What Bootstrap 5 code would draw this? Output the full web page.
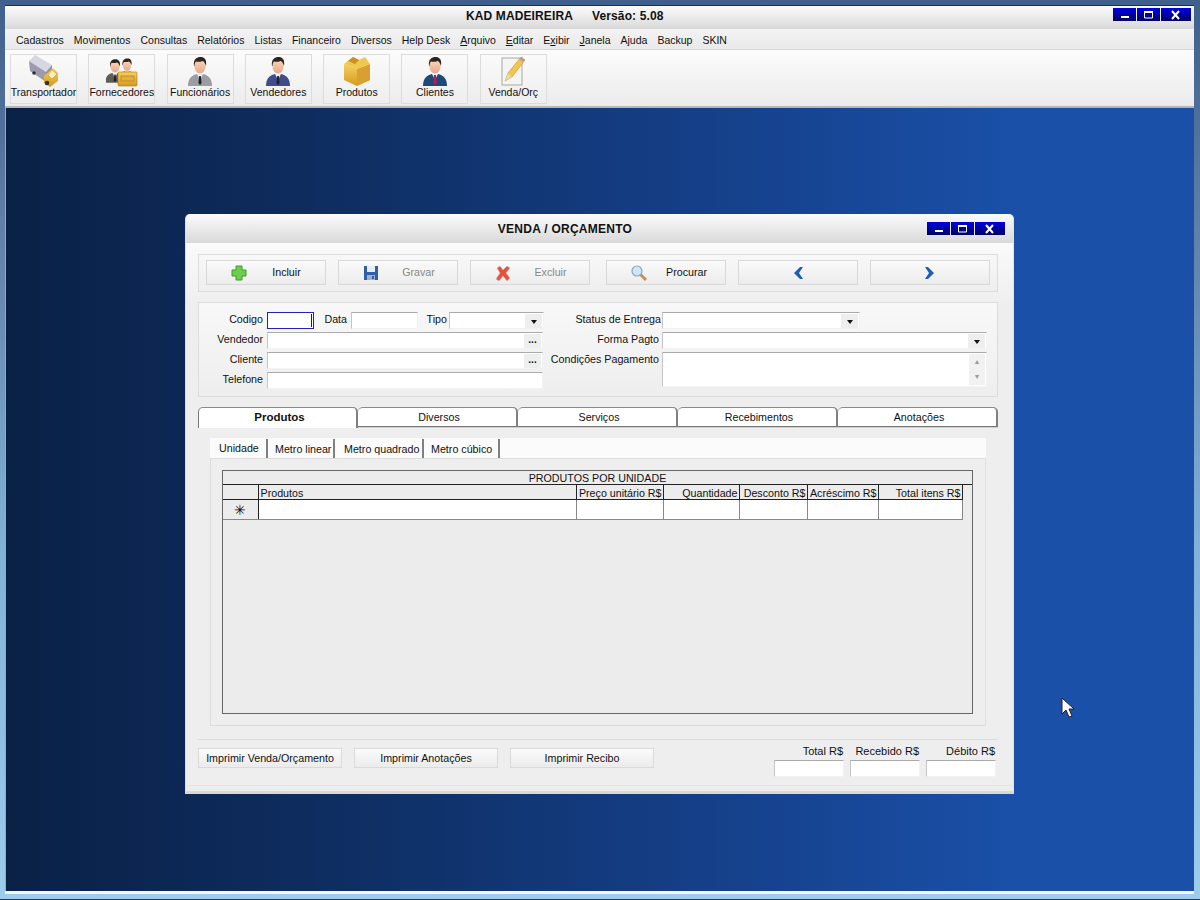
<!DOCTYPE html>
<html lang="pt-BR">
<head>
<meta charset="UTF-8" />
<title>KAD MADEIREIRA</title>
<link href="https://cdn.jsdelivr.net/npm/bootstrap@5.3.0/dist/css/bootstrap.min.css" rel="stylesheet" />
<style>
html, body { height: 100%; margin: 0; }
body { width: 1200px; height: 900px; overflow: hidden; font-family: "Liberation Sans", Arial, sans-serif; font-size: 10.7px; line-height: 13px; color: #111; background: #5d7ea6; }

.app-frame { height: 900px; padding: 5px 6px 5px 5px; background: linear-gradient(180deg, #3f5f8c 0%, #5f7fa8 25%, #7fb0d8 60%, #9ccdec 100%); border-bottom: 1px solid #22364f; }
.app-shell { height: 100%; display: flex; flex-direction: column; border-top: 1px solid #12305e; border-bottom: 3px solid #f0f8fc; }
.app-title { height: 23px; flex: none; background: linear-gradient(180deg, #fbfbfb, #d9d9d9); position: relative; font: bold 12px "Liberation Sans", sans-serif; letter-spacing: .12px; padding-top: 3px; padding-left: 461px; color: #111; }
.app-title span + span { margin-left: 19px; }
.win-btns { position: absolute; top: 2px; right: 3px; display: flex; gap: 1px; }
.win-btn { width: 23px; height: 13px; background: linear-gradient(180deg, #0000e6, #000060); display: flex; align-items: center; justify-content: center; }
.win-btn.close { width: 30px; }
.app-menu { height: 21px; flex: none; background: linear-gradient(180deg, #f3f3f3, #e9e9e9); border-bottom: 1px solid #d8d8d8; padding: 2px 0 0 11px; display: flex; gap: 10px; align-items: center; font-size: 10.5px; }
.app-tools { height: 58px; flex: none; background: linear-gradient(180deg, #fcfcfc, #ebebeb); border-bottom: 2px solid #b6b6b6; padding: 4px 0 0 5px; display: flex; gap: 11.3px; }
.tool { width: 67px; height: 50px; padding: 0; display: flex; flex-direction: column; align-items: center; background: linear-gradient(180deg, #fafafa, #eeeeee); border: 1px solid #dcdcdc; border-radius: 0; font-size: 10.5px; line-height: 13px; color: #111; white-space: nowrap; }
.tool svg { height: 32px; flex: none; margin-bottom: -1px; }
.tool span { display: block; }

.mdi { flex: 1; position: relative; border-left: 1px solid #9aa8b8; background: linear-gradient(90deg, #0a2146 0%, #0e2c5e 25%, #15408a 60%, #1a50a8 85%, #1a50a8 100%); }
.child { position: absolute; left: 179px; top: 106px; width: 829px; height: 580px; background: #ededed; border-radius: 5px 5px 0 0; border-left: 1px solid #cfe2f0; border-right: 1px solid #d8e4ee; border-bottom: 3px solid #ddd8d0; display: flex; flex-direction: column; }
.child-title { height: 29px; flex: none; background: linear-gradient(180deg, #fbfbfb, #d9d9d9); border-radius: 5px 5px 0 0; position: relative; text-align: center; font: bold 12px "Liberation Sans", sans-serif; letter-spacing: .25px; padding-top: 8px; padding-right: 69px; color: #111; }
.child-title .win-btns { top: 8px; right: 8px; }
.child-title .win-btn { width: 23px; }
.child-title .win-btn.close { width: 30px; }
.child-body { flex: 1; margin-bottom: 5px; padding: 11px 15px 0 12px; border-bottom: 1px solid #dde6f0; background: linear-gradient(180deg, #fafafa, #eeeeee 12%); display: flex; flex-direction: column; }

.panel { border: 1px solid #dcdcdc; background: linear-gradient(180deg, #f8f8f8, #eeeeee); }
.action-bar { height: 38px; flex: none; padding: 5px 7px 0; display: flex; }
.act { width: 120px; height: 25px; margin-right: 12px; padding: 0; display: flex; align-items: center; background: linear-gradient(180deg, #fafafa, #ececec); border: 1px solid #d8d8d8; border-radius: 0; font-size: 10.7px; color: #111; }
.act:disabled { opacity: 1; background: linear-gradient(180deg, #fafafa, #ececec); border-color: #d8d8d8; color: #888; }
.act.gap-more { margin-left: 4px; }
.act svg { width: 18px; height: 18px; margin-left: 23px; flex: none; }
.act span { flex: 1; text-align: center; }
.act.nav { justify-content: center; }
.act.nav svg { margin: 0; width: 14px; height: 14px; }

.form-panel { margin-top: 10px; height: 95px; flex: none; padding: 9px 0 0 0; display: flex; }
.fcol-l { width: 344px; flex: none; }
.fcol-r { flex: 1; }
.frow { height: 17px; margin-bottom: 3px; display: flex; align-items: flex-start; }
.frow label { flex: none; text-align: right; line-height: 14px; white-space: nowrap; }
.lbl-l { width: 64px; margin-right: 4px; }
.lbl-r { width: 116px; margin-right: 3px; }
.lbl-r.tight { width: 118px; margin-right: 1px; }
.lbl-data { width: 33px; margin-right: 4px; }
.lbl-tipo { width: 29px; margin-right: 2px; }
.fld { height: 17px; background: #fff; border-top: 1px solid #aaa; border-left: 1px solid #c6c6c6; border-right: 1px solid #f2f2f2; border-bottom: 1px solid #f2f2f2; position: relative; flex: none; }
.fld.focus { border: 1px solid #2222b8; }
.fld.focus::after { content: ""; position: absolute; right: 1px; top: 1px; bottom: 1px; width: 1px; background: #222; }
.w-codigo { width: 47px; }
.w-data { width: 67px; }
.w-tipo { width: 95px; }
.w-left { width: 276px; }
.w-status { width: 198px; }
.w-right { width: 325px; }
.fld .drop { position: absolute; right: 1px; top: 1px; width: 17px; height: 14px; background: #eeeeee; display: flex; align-items: center; justify-content: center; }
.fld .drop::before { content: ""; border-left: 3.5px solid transparent; border-right: 3.5px solid transparent; border-top: 4px solid #111; margin-top: 2px; }
.fld .dots { position: absolute; right: 1px; top: 1px; width: 17px; height: 14px; background: #eeeeee; font-weight: bold; font-size: 10px; line-height: 12px; text-align: center; letter-spacing: 0; }
.fld.memo { height: 35px; }
.memo .scroll { position: absolute; right: 1px; top: 1px; bottom: 1px; width: 16px; background: #f1f1f1; color: #9a9a9a; font-size: 7px; line-height: 10px; text-align: center; display: flex; flex-direction: column; justify-content: space-around; }

.tabs-main { margin-top: 10px; height: 21px; flex: none; display: flex; border-bottom: 1px solid #cfcfcf; }
.tabm { width: 160px; height: 20px; padding-left: 4px; background: #fff; border-top: 1px solid #8a8a8a; border-right: 2px solid #808080; border-bottom: 1px solid #777; border-radius: 5px 5px 0 0; text-align: center; line-height: 19px; font-size: 10.7px; }
.tabm:first-child { border-left: 1px solid #777; }
.tabm.active { height: 21px; border-bottom: 0; font-weight: bold; font-size: 11.5px; }
.tab-body { height: 312px; flex: none; padding: 10px 12px 0; border-bottom: 1px solid #dcdcdc; }
.tabs-sub { height: 20px; background: #fbfbfb; display: flex; padding-left: 2px; }
.tabs-sub div { height: 19px; margin-top: 1px; line-height: 20px; padding-left: 7px; border-right: 2px solid #808080; white-space: nowrap; font-size: 10.7px; }
.tabs-sub div:first-child { line-height: 18px; }
.tabs-sub .s1 { width: 56px; }
.tabs-sub .s2 { width: 67px; }
.tabs-sub .s3 { width: 89px; padding-left: 9px; }
.tabs-sub .s4 { width: 76px; }
.sub-body { height: 268px; border: 1px solid #dcdcdc; border-right-color: #e0e0e0; padding: 11px 12px 0 11px; }
.grid-box { height: 244px; border: 1px solid #666; background: #ececec; }
.grid-title { height: 14px; border-bottom: 1px solid #222; text-align: center; line-height: 15px; font-size: 10.7px; }
.grid-table { width: 739px; table-layout: fixed; border-collapse: collapse; }
.grid-table .c0 { width: 35px; }
.grid-table .c1 { width: 318px; }
.grid-table .c2 { width: 87px; }
.grid-table .c3 { width: 76px; }
.grid-table .c4 { width: 68px; }
.grid-table .c5 { width: 71px; }
.grid-table .c6 { width: 84px; }
.grid-table th { height: 14px; font-weight: normal; border-right: 1px solid #222; border-bottom: 1px solid #222; padding: 2px 1px 0 2px; line-height: 12px; font-size: 10.7px; white-space: nowrap; }
.grid-table td { height: 20px; background: #fff; border-right: 1px solid #888; border-bottom: 1px solid #888; padding: 0; }
.grid-table td.star { background: #ececec; text-align: center; border-right: 1px solid #222; font-size: 14px; line-height: 16px; }

.foot { margin-top: 8px; display: flex; justify-content: space-between; }
.foot-btns { display: flex; gap: 12px; }
.foot-btns .btn { width: 144px; height: 20px; padding: 0; font-size: 10.7px; line-height: 18px; color: #111; background: linear-gradient(180deg, #fbfbfb, #ebebeb); border: 1px solid #dadada; border-radius: 0; }
.totals { display: flex; gap: 6px; padding-right: 2px; margin-top: -4px; }
.total { width: 70px; text-align: right; }
.total label { display: block; height: 16px; line-height: 14px; white-space: nowrap; padding-right: 1px; font-size: 11px; }
.total .fld { width: 70px; }
.cursor { position: absolute; left: 1055px; top: 589px; }
</style>
</head>
<body>
<svg width="0" height="0" class="position-absolute">
  <defs>
    <linearGradient id="skin" x1="0" y1="0" x2="0" y2="1"><stop offset="0" stop-color="#fcd9c0"/><stop offset="1" stop-color="#e8a888"/></linearGradient>
    <linearGradient id="yel" x1="0" y1="0" x2="0" y2="1"><stop offset="0" stop-color="#f7cf5c"/><stop offset="1" stop-color="#d49a20"/></linearGradient>
    <symbol id="person" viewBox="0 0 32 32">
      <path d="M4 31c0-8 4-11 9-12h6c5 1 9 4 9 12z" fill="currentColor"/>
      <path d="M13 19l3 6 3-6z" fill="#eef"/>
      <path d="M15.2 21h1.6l.8 7-1.6 2-1.6-2z" fill="#222"/>
      <ellipse cx="16" cy="11" rx="5.6" ry="7.4" fill="url(#skin)"/>
      <path d="M10 11c-1-7 3-9 6.500-9 4 0 6.500 2.500 5.500 9-1-3-2-4.500-3.500-5-2 1-5 1-6.500 .5-1 1-1.500 2.500-1.500 4.500z" fill="#2d2620"/>
    </symbol>
  </defs>
</svg>

<div class="app-frame">
  <div class="app-shell">
    <div class="app-title">
      <span>KAD MADEIREIRA</span><span>Versão: 5.08</span>
      <div class="win-btns">
        <div class="win-btn"><svg width="12" height="9"><rect x="2" y="6" width="8" height="2" fill="#fff"/></svg></div>
        <div class="win-btn"><svg width="12" height="9"><path d="M1.500 1.500h8v6.500h-8z" fill="none" stroke="#fff"/><rect x="1" y="1" width="9" height="2" fill="#fff"/></svg></div>
        <div class="win-btn close"><svg width="12" height="10"><path d="M2 1l7 8M9 1l-7 8" stroke="#fff" stroke-width="2"/></svg></div>
      </div>
    </div>
    <div class="app-menu">
      <span>Cadastros</span><span>Movimentos</span><span>Consultas</span><span>Relatórios</span><span>Listas</span><span>Financeiro</span><span>Diversos</span><span>Help Desk</span><span><u>A</u>rquivo</span><span><u>E</u>ditar</span><span>E<u>x</u>ibir</span><span><u>J</u>anela</span><span>Ajuda</span><span>Backup</span><span>SKIN</span>
    </div>
    <div class="app-tools">
      <button class="btn tool" type="button">
        <svg width="32" height="32" viewBox="0 0 32 32">
          <path d="M1 6l6-6 17 10-6 7z" fill="#d5d7e2"/>
          <path d="M1 6l17 11v10L2 16z" fill="#9a9cab"/>
          <path d="M18 17l6-7v5l-6 5z" fill="#8d8f9c"/>
          <path d="M16 21l9-8 5 5v8l-8 6-6-4z" fill="url(#yel)"/>
          <path d="M24 15l5 4-5 5-4-4z" fill="#f8eeb8" stroke="#c09028" stroke-width=".5"/>
          <circle cx="6" cy="18" r="1.800" fill="#333"/><circle cx="19" cy="28" r="2.300" fill="#333"/>
        </svg>
        <span>Transportador</span>
      </button>
      <button class="btn tool" type="button">
        <svg width="32" height="32" viewBox="0 0 32 32">
          <use href="#person" x="-4" y="0" width="26" height="31" color="#5e5e56"/>
          <use href="#person" x="9" y="0" width="24" height="28" color="#8a7a50"/>
          <rect x="12" y="17" width="19" height="14" rx="1" fill="url(#yel)" stroke="#a87a18" stroke-width=".6"/>
          <rect x="15" y="21" width="13" height="5" fill="#e2b040" stroke="#a87a18" stroke-width=".6"/>
        </svg>
        <span>Fornecedores</span>
      </button>
      <button class="btn tool" type="button"><svg width="32" height="32" class="p-gray"><use href="#person" width="32" height="32" color="#9a9ea4"/></svg><span>Funcionários</span></button>
      <button class="btn tool" type="button"><svg width="32" height="32"><use href="#person" width="32" height="32" color="#3f4d8c"/></svg><span>Vendedores</span></button>
      <button class="btn tool" type="button">
        <svg width="32" height="32" viewBox="0 0 32 32">
          <path d="M3 9l13 5 13-5v16l-13 6-13-6z" fill="url(#yel)"/>
          <path d="M16 14v17l13-6V9z" fill="#d8a030"/>
          <path d="M3 9l9-7 6 3 6-3 5 7-13 5z" fill="#f0c850"/>
          <path d="M12 2l6 3-4 4-7-3z" fill="#c8921f"/>
        </svg>
        <span>Produtos</span>
      </button>
      <button class="btn tool" type="button"><svg width="32" height="32"><use href="#person" width="32" height="32" color="#1f4a78"/><path d="M15 20h2l1 8-2 2-2-2z" fill="#b02050"/></svg><span>Clientes</span></button>
      <button class="btn tool" type="button">
        <svg width="32" height="32" viewBox="0 0 32 32">
          <rect x="5" y="3" width="20" height="27" fill="#f4f4f2" stroke="#a8a8a8"/>
          <path d="M8 26l3-8L24 2l4 3-13 17z" fill="#f3c44e" stroke="#c8922a" stroke-width=".6"/>
          <path d="M24 2l4 3-2 2-4-3z" fill="#b89aa0"/>
          <path d="M8 26l3-8 4 4z" fill="#e8d8a8"/>
        </svg>
        <span>Venda/Orç</span>
      </button>
    </div>

    <div class="mdi">
      <div class="child">
        <div class="child-title">
          VENDA / ORÇAMENTO
          <div class="win-btns">
            <div class="win-btn"><svg width="12" height="9"><rect x="2" y="6" width="8" height="2" fill="#fff"/></svg></div>
            <div class="win-btn"><svg width="12" height="9"><path d="M1.500 1.500h8v6.500h-8z" fill="none" stroke="#fff"/><rect x="1" y="1" width="9" height="2" fill="#fff"/></svg></div>
            <div class="win-btn close"><svg width="12" height="10"><path d="M2 1l7 8M9 1l-7 8" stroke="#fff" stroke-width="2"/></svg></div>
          </div>
        </div>
        <div class="child-body">
          <div class="panel action-bar">
            <button class="btn act" type="button">
              <svg viewBox="0 0 18 18"><path d="M6 2h6v4h4v6h-4v4H6v-4H2V6h4z" fill="#6ccf4a" stroke="#3f9a2c"/></svg><span>Incluir</span>
            </button>
            <button class="btn act" type="button" disabled>
              <svg viewBox="0 0 18 18"><path d="M2 2h14v14H2z" fill="#2f5fa8"/><rect x="5" y="2" width="8" height="6" fill="#e8eef6"/><rect x="5" y="11" width="8" height="5" fill="#9fb0c8"/><rect x="10" y="12" width="2" height="3" fill="#2f5fa8"/></svg><span>Gravar</span>
            </button>
            <button class="btn act" type="button" disabled>
              <svg viewBox="0 0 18 18"><path d="M3 4l3-2 3 4 4-4 3 2-4 5 4 5-3 3-4-5-4 5-3-2 4-6z" fill="#e8503a" stroke="#c0c0c0" stroke-width=".6"/></svg><span>Excluir</span>
            </button>
            <button class="btn act gap-more" type="button">
              <svg viewBox="0 0 18 18"><path d="M10 10l6 6" stroke="#c8905a" stroke-width="3"/><circle cx="7" cy="7" r="5" fill="#cfe6f6" stroke="#8fa8bc" stroke-width="1.200"/></svg><span>Procurar</span>
            </button>
            <button class="btn act nav" type="button" aria-label="Anterior">
              <svg viewBox="0 0 14 14"><path d="M9 1L3 7l6 6h3L8 7l4-6z" fill="#1f5fb0"/></svg>
            </button>
            <button class="btn act nav m-0" type="button" aria-label="Próximo">
              <svg viewBox="0 0 14 14"><path d="M5 1l6 6-6 6H2l4-6-4-6z" fill="#1f5fb0"/></svg>
            </button>
          </div>

          <div class="panel form-panel">
            <div class="fcol-l">
              <div class="frow">
                <label class="lbl-l">Codigo</label><div class="fld focus w-codigo"></div>
                <label class="lbl-data">Data</label><div class="fld w-data"></div>
                <label class="lbl-tipo">Tipo</label><div class="fld w-tipo"><div class="drop"></div></div>
              </div>
              <div class="frow"><label class="lbl-l">Vendedor</label><div class="fld w-left"><div class="dots">...</div></div></div>
              <div class="frow"><label class="lbl-l">Cliente</label><div class="fld w-left"><div class="dots">...</div></div></div>
              <div class="frow"><label class="lbl-l">Telefone</label><div class="fld w-left"></div></div>
            </div>
            <div class="fcol-r">
              <div class="frow"><label class="lbl-r tight">Status de Entrega</label><div class="fld w-status"><div class="drop"></div></div></div>
              <div class="frow"><label class="lbl-r">Forma Pagto</label><div class="fld w-right"><div class="drop"></div></div></div>
              <div class="frow"><label class="lbl-r">Condições Pagamento</label><div class="fld memo w-right"><div class="scroll"><span>▲</span><span>▼</span></div></div></div>
            </div>
          </div>

          <div class="tabs-main">
            <div class="tabm active">Produtos</div><div class="tabm">Diversos</div><div class="tabm">Serviços</div><div class="tabm">Recebimentos</div><div class="tabm">Anotações</div>
          </div>
          <div class="tab-body">
            <div class="tabs-sub">
              <div class="s1">Unidade</div><div class="s2">Metro linear</div><div class="s3">Metro quadrado</div><div class="s4">Metro cúbico</div>
            </div>
            <div class="sub-body">
              <div class="grid-box">
                <div class="grid-title">PRODUTOS POR UNIDADE</div>
                <table class="grid-table">
                  <colgroup><col class="c0"><col class="c1"><col class="c2"><col class="c3"><col class="c4"><col class="c5"><col class="c6"></colgroup>
                  <tr><th></th><th>Produtos</th><th class="text-end">Preço unitário R$</th><th class="text-end">Quantidade</th><th class="text-end">Desconto R$</th><th class="text-end">Acréscimo R$</th><th class="text-end">Total itens R$</th></tr>
                  <tr><td class="star">✳</td><td></td><td></td><td></td><td></td><td></td><td></td></tr>
                </table>
              </div>
            </div>
          </div>

          <div class="foot">
            <div class="foot-btns">
              <button class="btn" type="button">Imprimir Venda/Orçamento</button>
              <button class="btn" type="button">Imprimir Anotações</button>
              <button class="btn" type="button">Imprimir Recibo</button>
            </div>
            <div class="totals">
              <div class="total"><label>Total R$</label><div class="fld"></div></div>
              <div class="total"><label>Recebido R$</label><div class="fld"></div></div>
              <div class="total"><label>Débito R$</label><div class="fld"></div></div>
            </div>
          </div>
        </div>
      </div>
      <svg class="cursor" width="14" height="22" viewBox="0 0 14 22"><path d="M1 1v16l4-4 3 7 3-1-3-7h5z" fill="#fff" stroke="#222"/></svg>
    </div>
  </div>
</div>
</body>
</html>
